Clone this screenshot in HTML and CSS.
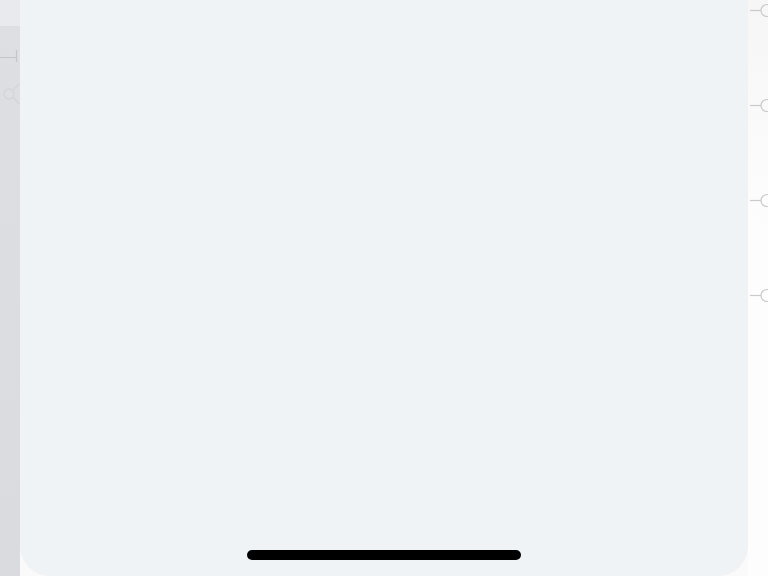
FILE: index.html
```html
<!DOCTYPE html>
<html lang="en">
<head>
<meta charset="utf-8">
<title>Sheet</title>
<link rel="stylesheet" href="styles.css">
</head>
<body>
<div class="stage">
  <aside class="left-pane">
    <div class="left-top"></div>
    <svg class="left-marks" width="20" height="120" viewBox="0 0 20 120">
      <path d="M0 57.5H16M16.5 50V62" stroke="#c4c5c9" stroke-width="1.2" fill="none"/>
      <circle cx="9" cy="94" r="5" stroke="#d4d5d9" stroke-width="1.3" fill="none"/>
      <path d="M13 97L19 104M13 90L19 84" stroke="#d4d5d9" stroke-width="1.3" fill="none"/>
    </svg>
  </aside>
  <main class="sheet">
    <div class="home-indicator"></div>
  </main>
  <aside class="right-pane">
    <svg class="right-marks" width="20" height="320" viewBox="0 0 20 320">
      <g stroke="#c9cacd" stroke-width="1.2" fill="none">
        <path d="M2 10.5H13"/><circle cx="19" cy="10.5" r="6"/>
        <path d="M2 105.5H13"/><circle cx="19" cy="105.5" r="6"/>
        <path d="M2 200.5H13"/><circle cx="19" cy="200.5" r="6"/>
        <path d="M2 295.5H13"/><circle cx="19" cy="295.5" r="6"/>
      </g>
    </svg>
  </aside>
</div>
</body>
</html>
```

FILE: styles.css
```css
html, body {
  margin: 0;
  padding: 0;
  width: 768px;
  height: 576px;
  overflow: hidden;
  font-family: "Inter", "Liberation Sans", sans-serif;
}
.stage {
  display: flex;
  width: 768px;
  height: 576px;
  background: #fafafa;
}
.left-pane {
  position: relative;
  width: 20px;
  flex: none;
  background: linear-gradient(#dedfe2, #dadbde);
}
.left-top {
  height: 26px;
  background: #e9eaed;
}
.left-marks {
  position: absolute;
  left: 0;
  top: 0;
}
.sheet {
  flex: none;
  width: 728px;
  height: 576px;
  background: #eff3f6;
  border-radius: 0 0 30px 30px;
  display: flex;
  flex-direction: column;
  justify-content: flex-end;
  align-items: center;
  box-sizing: border-box;
  padding-bottom: 16px;
}
.home-indicator {
  width: 274px;
  height: 10px;
  border-radius: 5px;
  background: #000;
}
.right-pane {
  position: relative;
  flex: 1;
  background: linear-gradient(#f6f6f6, #fdfdfd 40%);
}
.right-marks {
  position: absolute;
  left: 0;
  top: 0;
}
```
